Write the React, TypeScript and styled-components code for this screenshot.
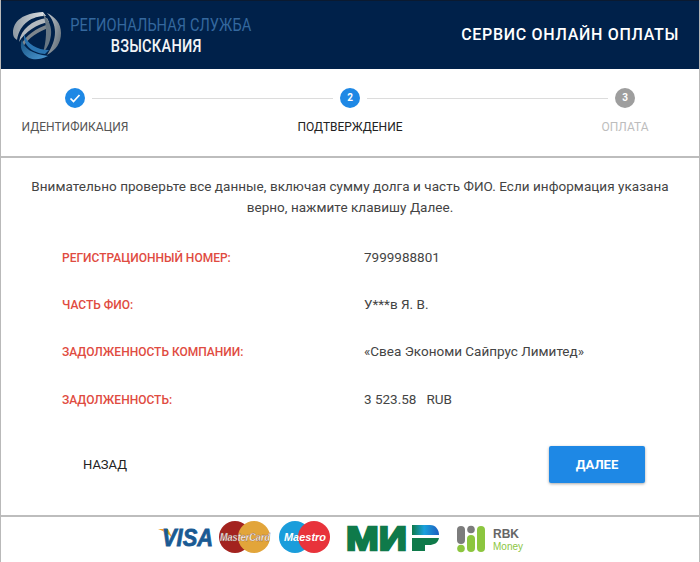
import React from "react";
import styled, { createGlobalStyle } from "styled-components";

const Global = createGlobalStyle`
  html, body { margin: 0; padding: 0; background: #fff; }
  body { font-family: Roboto, "Liberation Sans", sans-serif; }
  * { box-sizing: border-box; }
`;
const Page = styled.div`
  width: 700px; height: 562px; overflow: hidden;
  border-left: 1px solid #b9b9b9; border-right: 1px solid #b9b9b9;
  display: flex; flex-direction: column;
`;
const Header = styled.header`
  height: 69px; flex: none; background: #00214a; border-top: 1px solid #0b1a30;
  display: flex; align-items: center; justify-content: space-between;
  padding: 0 20px 0 9px;
`;
const Brand = styled.div`display: flex; align-items: center; gap: 8px;`;
const BrandText = styled.div`display: flex; flex-direction: column; align-items: center; width: 182px;`;
const BrandTop = styled.div`
  font: 400 18px/22px "Roboto", sans-serif; color: #34689e; white-space: nowrap;
  transform: scaleX(0.81); letter-spacing: 0.1px;
`;
const BrandBottom = styled.div`
  font: 500 18px/20px "Roboto", sans-serif; color: #f2f4f7; white-space: nowrap;
  transform: scaleX(0.81); letter-spacing: 0.3px; margin-right: 9px;
`;
const Title = styled.div`font: 500 16px/20px Roboto, sans-serif; color: #fff; letter-spacing: 0.7px; white-space: nowrap;`;
const Steps = styled.section`
  height: 89px; flex: none; border-bottom: 2px solid #bdbdbd; padding-top: 19px;
`;
const Track = styled.div`display: flex; align-items: center; padding: 0 64px;`;
const Circle = styled.div<{ $tone: string }>`
  width: 20px; height: 20px; border-radius: 50%; background: ${p => p.$tone}; color: #fff;
  display: flex; align-items: center; justify-content: center; flex: none;
  font: 700 10px/1 Roboto, sans-serif;
`;
const Line = styled.div`flex: 1; height: 1px; background: #dcdcdc; margin: 0 7px;`;
const Labels = styled.div`display: flex; justify-content: space-between; padding: 12px 19px 0;`;
const Label = styled.div<{ $color: string }>`
  width: 110px; text-align: center; font: 400 12px/14px Roboto, sans-serif;
  color: ${p => p.$color}; white-space: nowrap;
`;
const Main = styled.main`flex: 1; display: flex; flex-direction: column;`;
const Intro = styled.p`
  margin: 18px 0 0; padding: 0 20px; text-align: center; color: #444;
  font: 400 13.5px/21px Roboto, sans-serif; letter-spacing: 0.04px;
`;
const Rows = styled.dl`margin: 16px 0 0; padding: 0 0 0 61px;`;
const Row = styled.div`display: grid; grid-template-columns: 302px 1fr; height: 47.3px; align-items: center;`;
const Key = styled.dt`font: 500 12px/14px Roboto, sans-serif; color: #df4b41;`;
const Val = styled.dd`margin: 0; padding-bottom: 2px; font: 400 13.5px/18px Roboto, sans-serif; color: #444; white-space: pre;`;
const Actions = styled.div`
  display: flex; justify-content: space-between; align-items: center;
  padding: 0 54px 0 58px; margin-top: 23px;
`;
const Back = styled.button`
  background: none; border: 0; padding: 0 24px; height: 37px; color: #222;
  font: 400 13px/1 Roboto, sans-serif; cursor: pointer;
`;
const Next = styled.button`
  width: 96px; height: 37px; background: #1e88e5; color: #fff; border: 0; border-radius: 2px;
  font: 700 13px/1 Roboto, sans-serif; box-shadow: 0 1px 3px rgba(0,0,0,.35); cursor: pointer;
`;
const Footer = styled.footer`
  height: 47px; flex: none; border-top: 2px solid #bdbdbd; display: flex; align-items: flex-start;
  padding: 2px 0 0 157px;
`;

const Logo = () => (
  <svg width="52" height="52" viewBox="0 0 52 52">
    <defs>
      <linearGradient id="lg" x1="0" y1="0" x2="1" y2="0">
        <stop offset="0" stopColor="#8f9aa3" /><stop offset="1" stopColor="#dfe3e6" />
      </linearGradient>
      <linearGradient id="lr" x1="0" y1="0" x2="1" y2="1">
        <stop offset="0" stopColor="#c3c9ce" /><stop offset="1" stopColor="#55626d" />
      </linearGradient>
      <linearGradient id="lb" x1="0" y1="0" x2="1" y2="1">
        <stop offset="0" stopColor="#14507f" /><stop offset="1" stopColor="#4e9ad4" />
      </linearGradient>
    </defs>
    <path d="M3 24 C3 12 13 4 33 3 L36 7 C22 7 10 14 7 31 C4 29 3 27 3 24Z" fill="url(#lg)" />
    <path d="M9 33 C11 20 22 11 37 9 L39 13 C27 15 15 23 9 33Z" fill="#b4babf" />
    <path d="M11 36 C15 27 26 19 39 15 L39 19 C29 22 18 29 13 38Z" fill="#7d868d" />
    <path d="M37 4 C45 8 51 14 51 24 C51 34 46 41 37 46 C42 38 45 31 45 23 C45 16 42 9 37 4Z" fill="url(#lr)" />
    <path d="M33 5 C39 11 42 18 41 26 C40 33 38 38 33 44 C36 33 38 19 33 5Z" fill="#667683" />
    <path d="M12 30 C13 39 22 45 38 47 C30 51 24 51 19 49 C12 45 9 38 12 30Z" fill="url(#lb)" />
    <path d="M14 25 C17 35 27 41 39 41 L35 45 C24 44 13 38 14 25Z" fill="#2a74b0" />
  </svg>
);

const Cards = () => (
  <svg width="370" height="38" viewBox="0 0 370 38" fontFamily="Liberation Sans, sans-serif">
    <defs>
      <linearGradient id="mir" x1="0" y1="0" x2="1" y2="0">
        <stop offset="0" stopColor="#0f7a4a" /><stop offset=".45" stopColor="#1aa1dc" /><stop offset="1" stopColor="#1d5fc0" />
      </linearGradient>
    </defs>
    <path d="M0 10 L10 10 L15 20 C11 15 6 12 0 10Z" fill="#f0a72c" />
    <text x="4" y="27" fontSize="24" fontWeight="700" fontStyle="italic" fill="#1a5a93" stroke="#1a5a93" strokeWidth=".8" textLength="51" lengthAdjust="spacingAndGlyphs">VISA</text>
    <circle cx="77" cy="18" r="16" fill="#a3231f" />
    <circle cx="96" cy="18" r="16" fill="#e2a53a" />
    <text x="62" y="22" fontSize="11" fontWeight="700" fontStyle="italic" fill="#fff" stroke="#7a4a3a" strokeWidth=".3" textLength="50" lengthAdjust="spacingAndGlyphs">MasterCard</text>
    <circle cx="137" cy="18" r="16" fill="#1a9ddb" />
    <circle cx="156" cy="18" r="16" fill="#e8333b" />
    <text x="126" y="22" fontSize="11.5" fontWeight="700" fontStyle="italic" fill="#fff" textLength="42" lengthAdjust="spacingAndGlyphs">Maestro</text>
    <text x="188" y="31" fontSize="34" fontWeight="700" fill="#0f7a4a" stroke="#0f7a4a" strokeWidth="2.4" textLength="61" lengthAdjust="spacingAndGlyphs">МИ</text>
    <path d="M254 6 H272 C278 6 281 11 281 16 H254Z" fill="url(#mir)" />
    <path d="M254 19 H281 C280 24 276 26 271 26 H267 V32 H254Z" fill="#0f7a4a" />
    <g>
      <rect x="299" y="7" width="8" height="18" rx="4" fill="#7c7c7c" />
      <circle cx="303" cy="29.5" r="3.8" fill="#8cc63f" />
      <circle cx="313" cy="10.5" r="3.8" fill="#7c7c7c" />
      <rect x="309" y="16" width="8" height="17" rx="4" fill="#8cc63f" />
      <rect x="319" y="7" width="8" height="26" rx="4" fill="#8cc63f" />
    </g>
    <text x="335" y="19" fontSize="12" fontWeight="700" fill="#666">RBK</text>
    <text x="335" y="31" fontSize="10" fill="#8cc63f">Money</text>
  </svg>
);

const rows: [string, string][] = [
  ["РЕГИСТРАЦИОННЫЙ НОМЕР:", "7999988801"],
  ["ЧАСТЬ ФИО:", "У***в Я. В."],
  ["ЗАДОЛЖЕННОСТЬ КОМПАНИИ:", "«Свеа Экономи Сайпрус Лимитед»"],
  ["ЗАДОЛЖЕННОСТЬ:", "3 523.58   RUB"],
];

export default function App() {
  return (
    <Page>
      <Global />
      <Header>
        <Brand>
          <Logo />
          <BrandText>
            <BrandTop>РЕГИОНАЛЬНАЯ СЛУЖБА</BrandTop>
            <BrandBottom>ВЗЫСКАНИЯ</BrandBottom>
          </BrandText>
        </Brand>
        <Title>СЕРВИС ОНЛАЙН ОПЛАТЫ</Title>
      </Header>
      <Steps>
        <Track>
          <Circle $tone="#1e88e5">
            <svg width="12" height="12" viewBox="0 0 24 24" fill="none" stroke="#fff" strokeWidth="3.4"><path d="M3 13l6 6L21 6" /></svg>
          </Circle>
          <Line />
          <Circle $tone="#1e88e5">2</Circle>
          <Line />
          <Circle $tone="#9e9e9e">3</Circle>
        </Track>
        <Labels>
          <Label $color="#555">ИДЕНТИФИКАЦИЯ</Label>
          <Label $color="#222">ПОДТВЕРЖДЕНИЕ</Label>
          <Label $color="#bdbdbd">ОПЛАТА</Label>
        </Labels>
      </Steps>
      <Main>
        <Intro>Внимательно проверьте все данные, включая сумму долга и часть ФИО. Если информация указана верно, нажмите клавишу Далее.</Intro>
        <Rows>
          {rows.map(([k, v]) => (
            <Row key={k}><Key>{k}</Key><Val>{v}</Val></Row>
          ))}
        </Rows>
        <Actions>
          <Back>НАЗАД</Back>
          <Next>ДАЛЕЕ</Next>
        </Actions>
      </Main>
      <Footer><Cards /></Footer>
    </Page>
  );
}
